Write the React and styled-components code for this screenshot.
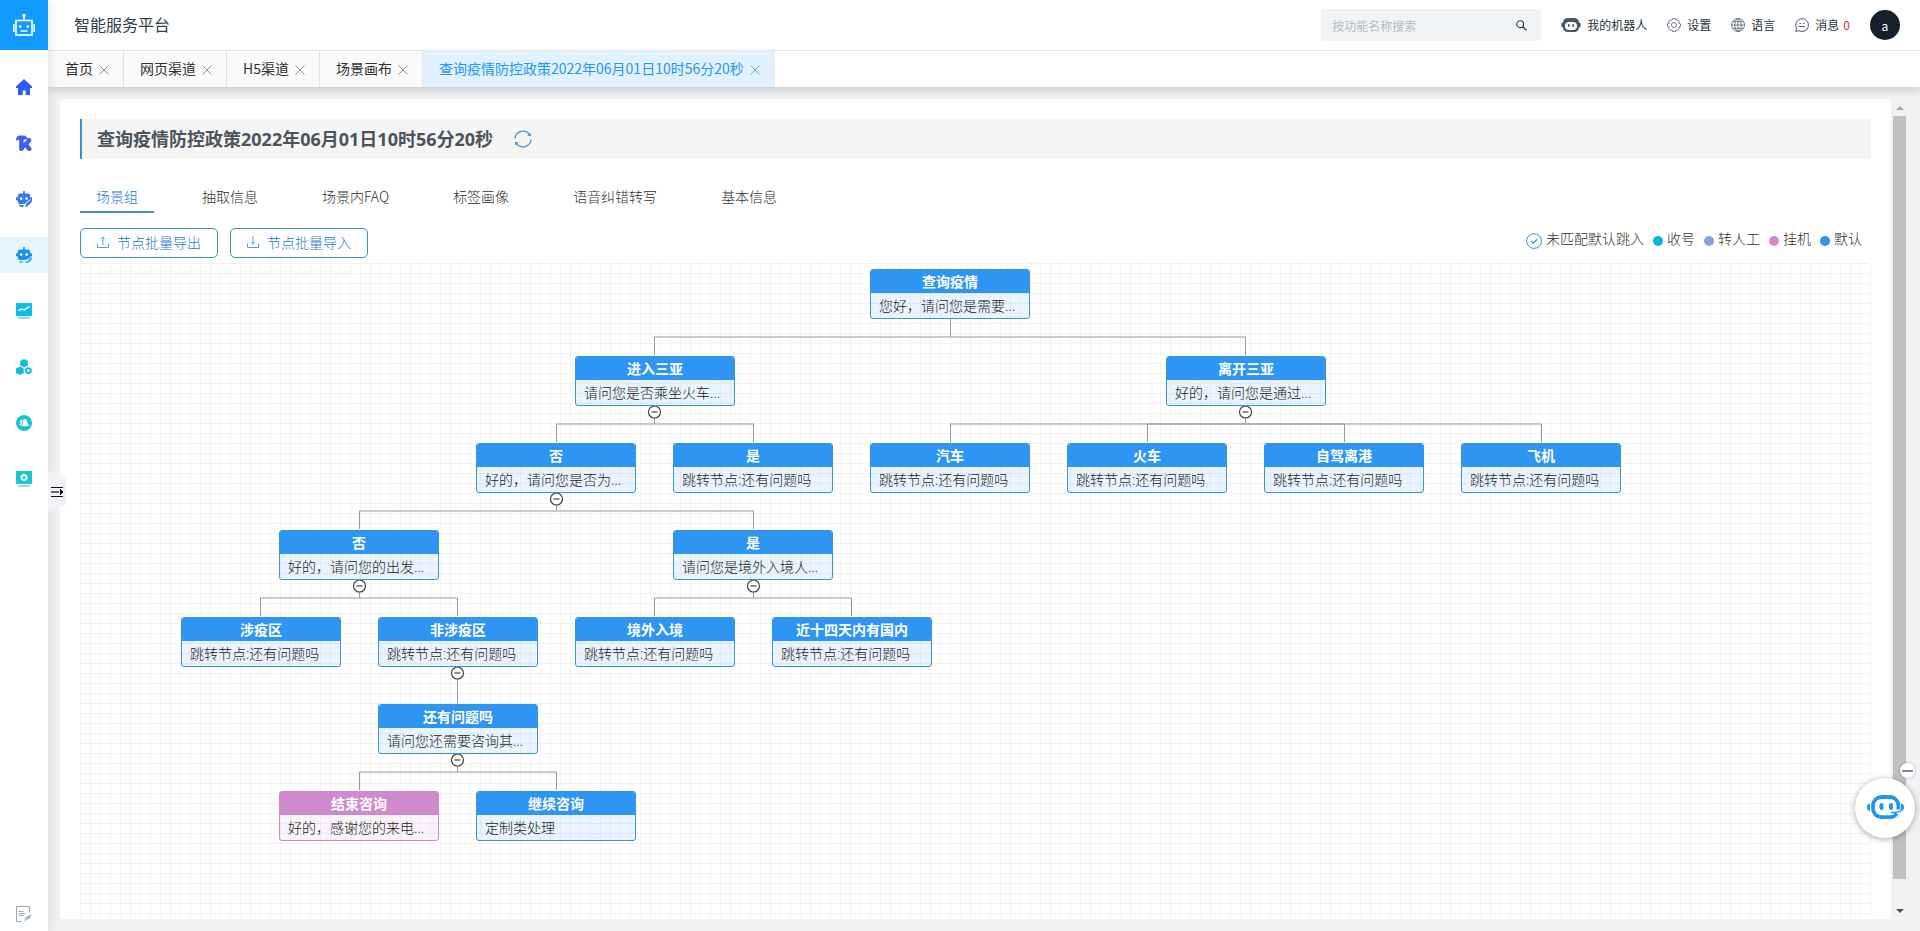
import React from 'react';
import styled, { createGlobalStyle } from 'styled-components';

const Global = createGlobalStyle`
  *, *::before, *::after { box-sizing: border-box; }
  body {
    margin: 0;
    font-family: "Noto Sans CJK SC", "Open Sans", sans-serif;
    font-size: 14px;
    color: #303133;
    background: #f1f2f4;
  }
  button, input { font: inherit; color: inherit; }
  button { margin: 0; padding: 0; border: 0; background: none; cursor: pointer; }
  a { color: inherit; text-decoration: none; }
  svg { display: block; flex: none; }
`;

/* ---------- shell ---------- */

const Shell = styled.div`
  display: flex;
  height: 100vh;
`;

const Sidebar = styled.nav`
  position: relative;
  z-index: 3;
  display: flex;
  flex: none;
  flex-direction: column;
  width: 48px;
  background: #fff;
  box-shadow: 1px 0 10px rgba(0, 21, 41, 0.12);
`;

const Logo = styled.a`
  display: flex;
  align-items: center;
  justify-content: center;
  height: 50px;
  margin-bottom: 19px;
  background: #129bff;
`;

const SideList = styled.div`
  display: flex;
  flex: 1;
  flex-direction: column;
  gap: 20px;
`;

const SideItem = styled.a`
  display: flex;
  align-items: center;
  justify-content: center;
  height: 36px;
  color: ${(p) => p.$color};
  background: ${(p) => (p.$active ? '#e5f4fe' : 'transparent')};
`;

const SideFooter = styled.a`
  display: flex;
  justify-content: center;
  padding-bottom: 9px;
  color: #9aa9b5;
`;

const Handle = styled.button`
  position: absolute;
  left: 48px;
  top: 50%;
  z-index: 3;
  display: flex;
  align-items: center;
  width: 18px;
  height: 42px;
  margin-top: 5px;
  padding-left: 3px;
  background: #f1f2f5;
  clip-path: polygon(0 0, 100% 8px, 100% 34px, 0 100%);
`;

const Main = styled.div`
  display: flex;
  flex: 1;
  flex-direction: column;
  min-width: 0;
`;

/* ---------- top bar ---------- */

const TopBar = styled.header`
  position: relative;
  z-index: 2;
  display: flex;
  align-items: center;
  height: 51px;
  padding: 0 20px 0 26px;
  background: #fff;
  border-bottom: 1px solid #e3e4e6;
`;

const Brand = styled.span`
  flex: 1;
  padding-bottom: 2px;
  font-size: 16px;
  line-height: 24px;
  color: #303c48;
`;

const Search = styled.form`
  display: flex;
  align-items: center;
  width: 220px;
  height: 32px;
  margin-right: 20px;
  padding: 0 14px 0 11px;
  border-radius: 4px;
  background: #f1f4f7;
`;

const SearchInput = styled.input`
  flex: 1;
  min-width: 0;
  padding: 0;
  border: 0;
  outline: 0;
  background: none;
  font-size: 12px;
  &::placeholder { color: #b6babe; opacity: 1; }
`;

const TopLinks = styled.div`
  display: flex;
  gap: 20px;
`;

const TopLink = styled.a`
  display: flex;
  align-items: center;
  gap: 6px;
  font-size: 12px;
  line-height: 18px;
  color: #25313c;
`;

const Count = styled.span`
  margin-left: -2px;
  color: #e02d2d;
`;

const Avatar = styled.button`
  width: 30px;
  height: 30px;
  margin-left: 20px;
  border-radius: 50%;
  background: #14202b;
  color: #fff;
  font-size: 12px;
`;

/* ---------- page tabs ---------- */

const PageTabs = styled.div`
  position: relative;
  z-index: 1;
  display: flex;
  height: 36px;
  padding-left: 1px;
  background: #fff;
  box-shadow: 0 2px 10px rgba(0, 0, 0, 0.2);
`;

const PageTab = styled.div`
  display: flex;
  align-items: center;
  gap: 6px;
  padding: 0 14px 0 16px;
  border-right: 1px solid ${(p) => (p.$active ? '#e1f1fe' : '#e2e2e2')};
  background: ${(p) => (p.$active ? '#e1f1fe' : '#fafafa')};
  color: ${(p) => (p.$active ? '#2298f0' : '#303133')};
`;

const PageLink = styled.a`
  padding-bottom: 2px;
`;

const CloseButton = styled.button`
  padding-top: 1px;
  color: ${(p) => (p.$active ? '#5eb0ee' : '#949494')};
`;

/* ---------- card ---------- */

const Content = styled.main`
  display: flex;
  flex: 1;
  min-height: 0;
  padding: 12px;
`;

const Card = styled.section`
  display: flex;
  flex: 1;
  flex-direction: column;
  min-width: 0;
  padding: 20px 20px 1px;
  border-radius: 4px 4px 0 0;
  background: #fff;
`;

const Heading = styled.div`
  display: flex;
  align-items: center;
  gap: 21px;
  height: 40px;
  padding-left: 15px;
  border-left: 2px solid #3a8ee0;
  background: #f5f5f5;
`;

const Title = styled.h1`
  margin: 0;
  font-family: "Open Sans", "Noto Sans CJK SC", sans-serif;
  font-size: 18px;
  font-weight: 700;
  line-height: 26px;
  color: #4b545d;
`;

const Tabs = styled.div`
  display: flex;
  gap: 32px;
  margin-top: 22px;
`;

const Tab = styled.button`
  height: 32px;
  padding: 0 16px 2px;
  line-height: 30px;
  font-weight: 300;
  color: ${(p) => (p.$active ? '#1f78d6' : '#303030')};
  box-shadow: ${(p) => (p.$active ? 'inset 0 -2px #3a8cd6' : 'none')};
`;

const Toolbar = styled.div`
  display: flex;
  gap: 12px;
  margin-top: 15px;
`;

const OutlineButton = styled.button`
  display: flex;
  align-items: center;
  gap: 8px;
  height: 30px;
  padding: 0 16px 2px;
  border: 1px solid #3a8ee0;
  border-radius: 5px;
  color: #1f78d6;
  font-weight: 300;
`;

const Legend = styled.div`
  display: flex;
  gap: 9px;
  height: 20px;
  margin-left: auto;
  padding-right: 9px;
  font-weight: 300;
  color: #303030;
`;

const LegendItem = styled.span`
  display: flex;
  align-items: center;
  gap: 4px;
  line-height: 20px;
`;

const LegendMark = styled.span`
  padding-top: 6px;
`;

const Dot = styled.i`
  display: block;
  width: 10px;
  height: 10px;
  border-radius: 50%;
  background: ${(p) => p.$color};
`;

/* ---------- flow canvas ---------- */

const Canvas = styled.div`
  position: relative;
  flex: 1;
  min-height: 0;
  overflow: hidden;
  background-image:
    linear-gradient(#f2f2f2 1px, transparent 1px),
    linear-gradient(90deg, #f4f4f4 1px, transparent 1px);
  background-size: 10px 10px;
  background-position: 0 5px;
`;

const Wires = styled.svg`
  position: absolute;
  inset: 0;
`;

const NodeBox = styled.article`
  position: absolute;
  width: 160px;
  height: 50px;
  border: 1px solid ${(p) => p.$tone.line};
  border-radius: 3px;
  background: ${(p) => p.$tone.body};
  overflow: hidden;
`;

const NodeTitle = styled.h2`
  height: 23px;
  margin: 0;
  font-size: 14px;
  font-weight: 700;
  line-height: 23px;
  text-align: center;
  color: #fff;
  background: ${(p) => p.$tone.head};
`;

const NodeText = styled.p`
  margin: 0;
  padding: 0 8px;
  font-family: "Open Sans", "Noto Sans CJK SC", sans-serif;
  font-weight: 300;
  line-height: 25px;
  white-space: nowrap;
  color: #1a1a1a;
`;

/* ---------- scrollbar and helper ---------- */

const ScrollTrack = styled.div`
  display: flex;
  flex: none;
  flex-direction: column;
  align-items: center;
  width: 17px;
  background: #f1f1f1;
`;

const ScrollArrow = styled.div`
  display: flex;
  align-items: center;
  justify-content: center;
  width: 17px;
  height: 17px;
`;

const ScrollThumb = styled.div`
  flex: 1;
  width: 13px;
  margin-bottom: 23px;
  background: #c1c1c1;
`;

const Assistant = styled.button`
  position: fixed;
  right: 5px;
  bottom: 93px;
  z-index: 5;
  display: flex;
  align-items: center;
  justify-content: center;
  width: 60px;
  height: 60px;
  padding-bottom: 2px;
  border-radius: 50%;
  background: #fff;
  box-shadow: 0 1px 6px rgba(0, 0, 0, 0.35);
`;

const AssistantHide = styled.button`
  position: fixed;
  right: 5px;
  bottom: 153px;
  z-index: 5;
  display: flex;
  align-items: center;
  justify-content: center;
  width: 15px;
  height: 15px;
  border-radius: 50%;
  background: #fff;
  box-shadow: 0 0 3px rgba(0, 0, 0, 0.3);
`;

/* ---------- icons ---------- */

const LogoIcon = () => (
  <svg width="22" height="22" viewBox="0 0 22 22" fill="none" stroke="#fff" strokeWidth="1.6">
    <rect x="3" y="6.5" width="16" height="14.5" />
    <path d="M11 1v5.5M.8 10v8M21.2 10v8M7.5 17h7" />
    <circle cx="11" cy="1.6" r="1" fill="#fff" />
    <circle cx="7.2" cy="12.5" r="1.3" fill="#fff" stroke="none" />
    <circle cx="14.8" cy="12.5" r="1.3" fill="#fff" stroke="none" />
  </svg>
);

const HomeIcon = () => (
  <svg width="16" height="16" viewBox="0 0 16 16" fill="currentColor">
    <path d="M8 0 16 7.6V9h-2v7H9.6v-4.6H6.8V16H2V9H0V7.6z" />
  </svg>
);

const KnowledgeIcon = () => (
  <svg width="16" height="16" viewBox="0 0 16 16" fill="currentColor">
    <path d="M0 6C-.3 2.500 1.500.8 4 .6L8.500.4 11 2.200V4L7.600 4.800V8L10.500 5.400C10.500 3.500 12 2.600 13.500 2.900 15.600 3.300 16 5.600 14.600 7L12.400 9.300 15 12.500C16.500 14.500 15 16 13.400 16 11.500 16 10.600 14.500 9.200 12.600L8 13.200C8.200 15.200 7 16 5.500 16 4 16 3 15 3.200 13.200V5.200L1.500 4.800z" />
  </svg>
);

const BotEditIcon = () => (
  <svg width="16" height="16" viewBox="0 0 16 16" fill="currentColor">
    <path d="M7.200 0h1.600v2.500h3.200a2 2 0 0 1 2 2V6l2 .6v3L11 13H4a2 2 0 0 1-2-2V9.800L0 9.200V6.500L2 6V4.500a2 2 0 0 1 2-2h3.200z" />
    <circle cx="5.200" cy="7.600" r="1.300" fill="#fff" />
    <circle cx="10.600" cy="7.600" r="1.300" fill="#fff" />
    <path d="M8.500 13.500 14.500 8.500" stroke="#fff" />
    <path d="m9 16 1-2.800 5-3.900 1 1.500-4.500 4.500zM3 13.600l5 .6L7 16H4.500z" />
  </svg>
);

const BotCallIcon = () => (
  <svg width="16" height="16" viewBox="0 0 16 16" fill="currentColor">
    <path d="M7.200 0h1.600v2.500h3.200a2 2 0 0 1 2 2V6l2 .8v2.400L14 9.800V11a2 2 0 0 1-2 2H4a2 2 0 0 1-2-2V9.800L0 9V6.500L2 6V4.500a2 2 0 0 1 2-2h3.200z" />
    <circle cx="5.200" cy="7.600" r="1.300" fill="#fff" />
    <circle cx="10.600" cy="7.600" r="1.300" fill="#fff" />
    <path d="M13.800 10.500a5 5 0 0 1-5 2.900" fill="none" stroke="#fff" strokeWidth=".8" />
    <path d="M15.400 10.500a6 6 0 0 1-6 4.800M3.500 14.800 6.500 15" fill="none" stroke="currentColor" strokeWidth="1.300" />
  </svg>
);

const MonitorIcon = () => (
  <svg width="16" height="16" viewBox="0 0 16 16" fill="currentColor">
    <path d="M1 0h14a1 1 0 0 1 1 1v11a1 1 0 0 1-1 1H1a1 1 0 0 1-1-1V1a1 1 0 0 1 1-1z" />
    <rect x="2" y="14.200" width="12" height="1.600" rx=".6" opacity=".7" />
    <path d="m2.500 7.600 3-1.600 2.500 1L13.500 3.600" fill="none" stroke="#fff" strokeWidth="1.400" />
  </svg>
);

const HexIcon = () => (
  <svg width="16" height="16" viewBox="0 0 16 16" fill="currentColor">
    <path d="m8 .1 3.900 2v4.400L8 8.500 4.100 6.500V2.100zM3.900 7.600l3.900 2V14l-3.900 2L0 14V9.600z" />
    <circle cx="12.400" cy="11.700" r="2.300" fill="none" stroke="currentColor" strokeWidth="1.800" />
    <circle cx="12.400" cy="11.700" r="3.200" fill="none" stroke="currentColor" strokeWidth=".9" strokeDasharray="1.680 1.680" />
  </svg>
);

const UserIcon = () => (
  <svg width="16" height="16" viewBox="0 0 16 16" fill="currentColor">
    <circle cx="8" cy="8" r="8" />
    <path d="M6.600 6C6.600 3.500 11.200 3.500 11.200 6L11.400 8.200 13 10.200 12 11.200H6.800L5.800 10.600 6.800 8.200zM3.400 9.800 4.600 8.400C3.800 6 4.600 4.400 6 4.600 5.600 6 6.200 7.600 5.400 9.200L5.200 10.800z" fill="#fff" />
  </svg>
);

const MonitorGearIcon = () => (
  <svg width="16" height="16" viewBox="0 0 16 16" fill="currentColor">
    <path d="M1 0h14a1 1 0 0 1 1 1v11a1 1 0 0 1-1 1H1a1 1 0 0 1-1-1V1a1 1 0 0 1 1-1z" />
    <rect x="2" y="14.200" width="12" height="1.600" rx=".6" opacity=".7" />
    <circle cx="8" cy="6.400" r="2.300" fill="none" stroke="#fff" strokeWidth="1.600" />
    <circle cx="8" cy="6.400" r="3.400" fill="none" stroke="#fff" strokeWidth="1" strokeDasharray="1.780 1.780" />
  </svg>
);

const NoteIcon = () => (
  <svg width="16" height="16" viewBox="0 0 16 16" fill="none" stroke="currentColor">
    <path d="M13.500 6.500V.5H.5v15h5M2.500 5.500h5M2.500 7.500h7M2.500 9.500h5" />
    <path d="m8 15.500 1-3.800 6.500-3.700-2 4.500-3 1.700z" fill="currentColor" stroke="none" />
    <path d="M7.500 15.500 12 11.500" stroke="#fff" strokeWidth=".8" />
  </svg>
);

const HandleIcon = () => (
  <svg width="12" height="10" viewBox="0 0 12 10" shapeRendering="crispEdges">
    <path d="M0 .5h12M0 9.500h12" stroke="#111" />
    <path d="M0 5h8" stroke="#666" strokeWidth="2" />
    <path d="m9 2 3 3-3 3z" fill="#111" />
  </svg>
);

const SearchIcon = () => (
  <svg width="11" height="11" viewBox="0 0 11 11" fill="none" stroke="#28323c" strokeWidth="1.100">
    <circle cx="4.200" cy="4.200" r="3.400" />
    <path d="m6.700 6.700 3.700 3.700" strokeWidth="1.300" />
  </svg>
);

const BotIcon = () => (
  <svg width="20" height="14" viewBox="0 0 20 14" fill="#4a5662">
    <path d="M7 0h6c3 0 5 2 5 4.500l1.600.6v4L18 9.500C18 12 16 14 13 14H7c-3 0-5-2-5-4.500L.4 9V5L2 4.500C2 2 4 0 7 0z" />
    <rect x="4" y="4" width="12" height="8" rx="4" fill="#fff" />
    <rect x="7" y="6" width="1.700" height="3" rx=".8" />
    <rect x="11.300" y="6" width="1.700" height="3" rx=".8" />
  </svg>
);

const GearIcon = () => (
  <svg width="14" height="14" viewBox="0 0 14 14" fill="none" stroke="#65717c" strokeWidth=".9">
    <path d="M5.600.6h2.800l.5 1.700 1.700-.6 1.800 1.800-.7 1.700 1.800.6v2.600l-1.800.6.7 1.700-1.800 1.800-1.700-.7-.5 1.700H5.600l-.5-1.700-1.700.7-1.800-1.800.7-1.700L.5 8.400V5.800l1.800-.6-.7-1.700 1.800-1.800 1.700.6z" />
    <circle cx="7" cy="7" r="2.500" />
  </svg>
);

const GlobeIcon = () => (
  <svg width="14" height="14" viewBox="0 0 14 14" fill="none" stroke="#65717c" strokeWidth=".9">
    <circle cx="7" cy="7" r="6.500" />
    <ellipse cx="7" cy="7" rx="3.200" ry="6.500" />
    <path d="M7 .5v13M.5 7h13M1.600 3.700h10.800M1.600 10.300h10.800" />
  </svg>
);

const MessageIcon = () => (
  <svg width="14" height="14" viewBox="0 0 14 14" fill="none" stroke="#505c67">
    <path d="M.8 13.400 1.400 10A6.400 6.400 0 1 1 4 12.700z" />
    <path d="M4.500 5.500h1.500M8 5.500h1.500M4 8.500h6" />
  </svg>
);

const CloseIcon = () => (
  <svg width="10" height="10" viewBox="0 0 10 10" stroke="currentColor">
    <path d="m.5.5 9 9M9.500.5l-9 9" />
  </svg>
);

const RefreshIcon = () => (
  <svg width="18" height="18" viewBox="0 0 18 18" fill="none" stroke="#3a8ee6" strokeWidth="1.300">
    <path d="M1 8.500A8 8 0 0 1 15.500 4.600M17 9.500A8 8 0 0 1 2.500 13.400" />
    <path d="M13.300 5.600 17 6.200 16.600 2.800zM4.700 12.400 1 11.800 1.400 15.200z" fill="#3a8ee6" stroke="none" />
  </svg>
);

const ExportIcon = () => (
  <svg width="12" height="12" viewBox="0 0 12 12" fill="none" stroke="#4f9eec">
    <path d="M.5 7.500v4h11v-4M6 9V1M4 2.800 6 .8l2 2" />
  </svg>
);

const ImportIcon = () => (
  <svg width="12" height="12" viewBox="0 0 12 12" fill="none" stroke="#4f9eec">
    <path d="M.5 7.500v4h11v-4M6 0v8M4 6.300l2 2 2-2" />
  </svg>
);

const CheckIcon = () => (
  <svg width="16" height="16" viewBox="0 0 16 16" fill="none" stroke="#3390e4">
    <circle cx="8" cy="8" r="7.400" />
    <path d="m5 8 2.300 2.200L11.300 6.300" strokeWidth="1.300" />
  </svg>
);

const AssistantIcon = () => (
  <svg width="37" height="24" viewBox="0 0 37 24" fill="none" stroke="#2196ee">
    <path d="M29.800 18.500a8 8 0 0 1-6.800 3.600h-8.500a8.500 8.500 0 0 1-8.500-8.600v-3A8.500 8.500 0 0 1 14.500 2H23a8.500 8.500 0 0 1 8.400 8.500v4" strokeWidth="3.800" />
    <path d="M24 17.200c5 .8 8.500-.2 11-2.200" strokeWidth="1.600" />
    <path d="M3 8.500v7.500C1 16 0 14.500 0 12.200S1 8.500 3 8.500zM34 8.500c2 0 3 1.500 3 3.700S36 16 34 16z" fill="#2196ee" stroke="none" />
    <rect x="12.500" y="8" width="4" height="7" rx="2" fill="#2196ee" stroke="none" />
    <rect x="22" y="8" width="4" height="7" rx="2" fill="#2196ee" stroke="none" />
  </svg>
);

/* ---------- data ---------- */

const SIDE_ITEMS = [
  { label: '首页', color: '#2f5bfb', Icon: HomeIcon },
  { label: '知识', color: '#3f5ff2', Icon: KnowledgeIcon },
  { label: '机器人编辑', color: '#3278f2', Icon: BotEditIcon },
  { label: '语音机器人', color: '#1591f2', Icon: BotCallIcon, active: true },
  { label: '监控', color: '#12bcea', Icon: MonitorIcon },
  { label: '模块', color: '#12bcdc', Icon: HexIcon },
  { label: '用户', color: '#1dc2cc', Icon: UserIcon },
  { label: '系统', color: '#1dc6cc', Icon: MonitorGearIcon },
];

const PAGE_TITLE = '查询疫情防控政策2022年06月01日10时56分20秒';
const PAGE_TABS = ['首页', '网页渠道', 'H5渠道', '场景画布', PAGE_TITLE];
const INNER_TABS = ['场景组', '抽取信息', '场景内FAQ', '标签画像', '语音纠错转写', '基本信息'];

const LEGEND = [
  ['收号', '#0ab3d8'],
  ['转人工', '#86a2e2'],
  ['挂机', '#ce8acc'],
  ['默认', '#2f92f0'],
];

const BLUE = { head: '#2f95f3', line: '#3a93dc', body: 'rgba(47, 149, 243, 0.1)' };
const PINK = { head: '#ce8acc', line: '#ce8acc', body: 'rgba(206, 138, 204, 0.1)' };

const NODE_W = 160;
const NODE_H = 50;
const SIBLING_STEP = 197;
const LEVEL_STEP = 87;
const TOP = 11;
const LEFT = 101;
const JUMP = '跳转节点:还有问题吗';

/* col counts half sibling steps from the leftmost leaf, level is the depth in the tree */
const NODES = [
  { id: 'root', col: 7, level: 0, title: '查询疫情', text: '您好，请问您是需要…' },
  { id: 'in', parent: 'root', col: 4, level: 1, title: '进入三亚', text: '请问您是否乘坐火车…' },
  { id: 'out', parent: 'root', col: 10, level: 1, title: '离开三亚', text: '好的，请问您是通过…' },
  { id: 'in-no', parent: 'in', col: 3, level: 2, title: '否', text: '好的，请问您是否为…' },
  { id: 'in-yes', parent: 'in', col: 5, level: 2, title: '是', text: JUMP },
  { id: 'car', parent: 'out', col: 7, level: 2, title: '汽车', text: JUMP },
  { id: 'train', parent: 'out', col: 9, level: 2, title: '火车', text: JUMP },
  { id: 'drive', parent: 'out', col: 11, level: 2, title: '自驾离港', text: JUMP },
  { id: 'plane', parent: 'out', col: 13, level: 2, title: '飞机', text: JUMP },
  { id: 'no-no', parent: 'in-no', col: 1, level: 3, title: '否', text: '好的，请问您的出发…' },
  { id: 'no-yes', parent: 'in-no', col: 5, level: 3, title: '是', text: '请问您是境外入境人…' },
  { id: 'risk', parent: 'no-no', col: 0, level: 4, title: '涉疫区', text: JUMP },
  { id: 'safe', parent: 'no-no', col: 2, level: 4, title: '非涉疫区', text: JUMP },
  { id: 'abroad', parent: 'no-yes', col: 4, level: 4, title: '境外入境', text: JUMP },
  { id: 'recent', parent: 'no-yes', col: 6, level: 4, title: '近十四天内有国内', text: JUMP },
  { id: 'more', parent: 'safe', col: 2, level: 5, title: '还有问题吗', text: '请问您还需要咨询其…' },
  { id: 'end', parent: 'more', col: 1, level: 6, title: '结束咨询', text: '好的，感谢您的来电…', tone: PINK },
  { id: 'go-on', parent: 'more', col: 3, level: 6, title: '继续咨询', text: '定制类处理' },
];

const byId = Object.fromEntries(NODES.map((n) => [n.id, n]));
const leftOf = (n) => LEFT + Math.floor((n.col * SIBLING_STEP) / 2);
const topOf = (n) => TOP + n.level * LEVEL_STEP;
/* wires run on pixel centres */
const centre = (n) => leftOf(n) + NODE_W / 2 + (n.col % 2 ? 0.5 : -0.5);

function FlowWires() {
  const links = NODES.filter((n) => n.parent);
  const parents = [...new Set(links.map((n) => n.parent))].filter((id) => id !== 'root');
  return (
    <Wires width="100%" height="100%" aria-hidden="true">
      {links.map((n) => {
        const p = byId[n.parent];
        const bottom = topOf(p) + NODE_H;
        return (
          <path
            key={n.id}
            d={`M${centre(p)} ${bottom}V${bottom + 18}H${centre(n)}V${topOf(n) - 1}`}
            fill="none"
            stroke="#999"
          />
        );
      })}
      {parents.map((id) => {
        const cx = centre(byId[id]);
        const cy = topOf(byId[id]) + NODE_H + 6;
        return (
          <g key={id} stroke="#444">
            <circle cx={cx} cy={cy} r="6" fill="#fff" strokeWidth="1.200" />
            <path d={`M${cx - 3} ${cy}h6`} strokeWidth="1.200" />
          </g>
        );
      })}
    </Wires>
  );
}

function FlowNode({ node }) {
  const tone = node.tone || BLUE;
  return (
    <NodeBox $tone={tone} style={{ left: leftOf(node), top: topOf(node) }}>
      <NodeTitle $tone={tone}>{node.title}</NodeTitle>
      <NodeText>{node.text}</NodeText>
    </NodeBox>
  );
}

export default function App() {
  return (
    <>
      <Global />
      <Shell>
        <Sidebar>
          <Logo href="#" aria-label="智能服务平台"><LogoIcon /></Logo>
          <SideList>
            {SIDE_ITEMS.map(({ label, color, Icon, active }) => (
              <SideItem key={label} href="#" aria-label={label} $color={color} $active={active}>
                <Icon />
              </SideItem>
            ))}
          </SideList>
          <SideFooter href="#" aria-label="反馈"><NoteIcon /></SideFooter>
          <Handle aria-label="展开菜单"><HandleIcon /></Handle>
        </Sidebar>

        <Main>
          <TopBar>
            <Brand>智能服务平台</Brand>
            <Search onSubmit={(e) => e.preventDefault()}>
              <SearchInput aria-label="按功能名称搜索" placeholder="按功能名称搜索" />
              <button aria-label="搜索"><SearchIcon /></button>
            </Search>
            <TopLinks>
              <TopLink href="#"><BotIcon />我的机器人</TopLink>
              <TopLink href="#"><GearIcon />设置</TopLink>
              <TopLink href="#"><GlobeIcon />语言</TopLink>
              <TopLink href="#"><MessageIcon />消息<Count>0</Count></TopLink>
            </TopLinks>
            <Avatar>a</Avatar>
          </TopBar>

          <PageTabs>
            {PAGE_TABS.map((name) => {
              const active = name === PAGE_TITLE;
              return (
                <PageTab key={name} $active={active}>
                  <PageLink href="#">{name}</PageLink>
                  <CloseButton aria-label={`关闭${name}`} $active={active}><CloseIcon /></CloseButton>
                </PageTab>
              );
            })}
          </PageTabs>

          <Content>
            <Card>
              <Heading>
                <Title>{PAGE_TITLE}</Title>
                <button aria-label="刷新"><RefreshIcon /></button>
              </Heading>
              <Tabs role="tablist">
                {INNER_TABS.map((name, i) => (
                  <Tab key={name} role="tab" aria-selected={i === 0} $active={i === 0}>{name}</Tab>
                ))}
              </Tabs>
              <Toolbar>
                <OutlineButton><ExportIcon />节点批量导出</OutlineButton>
                <OutlineButton><ImportIcon />节点批量导入</OutlineButton>
                <Legend>
                  <LegendItem><LegendMark><CheckIcon /></LegendMark>未匹配默认跳入</LegendItem>
                  {LEGEND.map(([name, color]) => (
                    <LegendItem key={name}><LegendMark><Dot $color={color} /></LegendMark>{name}</LegendItem>
                  ))}
                </Legend>
              </Toolbar>
              <Canvas>
                <FlowWires />
                {NODES.map((n) => <FlowNode key={n.id} node={n} />)}
              </Canvas>
            </Card>
            <ScrollTrack aria-hidden="true">
              <ScrollArrow>
                <svg width="8" height="4" viewBox="0 0 8 4"><path d="M0 4 4 0l4 4z" fill="#a3a3a3" /></svg>
              </ScrollArrow>
              <ScrollThumb />
              <ScrollArrow>
                <svg width="8" height="4" viewBox="0 0 8 4"><path d="M0 0h8L4 4z" fill="#505050" /></svg>
              </ScrollArrow>
            </ScrollTrack>
          </Content>
        </Main>
      </Shell>

      <AssistantHide aria-label="收起助手">
        <svg width="11" height="2" viewBox="0 0 11 2"><path d="M0 1h11" stroke="#2d3e5e" strokeWidth="1.200" /></svg>
      </AssistantHide>
      <Assistant aria-label="智能助手"><AssistantIcon /></Assistant>
    </>
  );
}
